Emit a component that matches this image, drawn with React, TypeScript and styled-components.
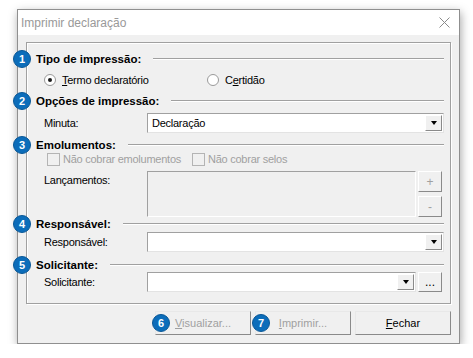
import styled, { createGlobalStyle } from "styled-components";

const GlobalStyle = createGlobalStyle`
  html, body {
    margin: 0;
    padding: 0;
    background: #ffffff;
  }
  body {
    font-family: "Liberation Sans", Arial, sans-serif;
    font-size: 11px;
    color: #000;
  }
  * {
    box-sizing: border-box;
  }
`;

const Window = styled.div`
  margin: 9px 0 0 17px;
  width: 443px;
  display: flex;
  flex-direction: column;
  border: 1px solid #8f8f8f;
  background: #f0f0f0;
  box-shadow: 1px 3px 9px rgba(0, 0, 0, 0.35);
`;

const TitleBar = styled.div`
  height: 25px;
  display: flex;
  align-items: center;
  justify-content: space-between;
  padding: 0 9px 0 3px;
  background: #ffffff;
  color: #999999;
  font-size: 12px;
`;

const Body = styled.div`
  display: flex;
  flex-direction: column;
  gap: 7px;
  padding: 7px 8px 8px 8px;
`;

const Panel = styled.div`
  display: flex;
  flex-direction: column;
  padding: 9px 6px 11px 9px;
  border: 1px solid #a0a0a0;
  box-shadow: inset 1px 1px 0 #ffffff, 1px 1px 0 #ffffff;
`;

const Heading = styled.div<{ $mt?: number }>`
  position: relative;
  display: flex;
  align-items: center;
  gap: 12px;
  height: 14px;
  margin-top: ${(p) => p.$mt ?? 0}px;
  font-size: 11.5px;
  font-weight: bold;
  white-space: nowrap;
`;

const Rule = styled.div`
  flex: 1;
  border-top: 1px solid #a0a0a0;
  border-bottom: 1px solid #ffffff;
`;

const Badge = styled.span<{ $left: number }>`
  position: absolute;
  left: ${(p) => p.$left}px;
  top: 50%;
  transform: translateY(-50%);
  width: 18px;
  height: 18px;
  display: flex;
  align-items: center;
  justify-content: center;
  border-radius: 50%;
  border: 1px solid #0a5897;
  background: #0c6dba;
  color: #ffffff;
  font-family: "Liberation Sans", Arial, sans-serif;
  font-size: 11px;
  font-weight: bold;
  z-index: 2;
`;

const Text = styled.span<{ $disabled?: boolean }>`
  font-size: 11px;
  letter-spacing: -0.25px;
  color: ${(p) => (p.$disabled ? "#a0a0a0" : "#000000")};
  white-space: nowrap;
`;

const RadioRow = styled.div`
  display: flex;
  align-items: center;
  height: 28px;
  padding-left: 8px;
`;

const RadioOption = styled.label<{ $width?: number }>`
  display: flex;
  align-items: center;
  gap: 6px;
  width: ${(p) => (p.$width ? `${p.$width}px` : "auto")};
`;

const RadioCircle = styled.span<{ $checked?: boolean }>`
  width: 12px;
  height: 12px;
  display: flex;
  align-items: center;
  justify-content: center;
  border-radius: 50%;
  border: 1px solid #9a9a9a;
  background: #ffffff;
  &::after {
    content: "";
    width: 4px;
    height: 4px;
    border-radius: 50%;
    background: ${(p) => (p.$checked ? "#1a1a1a" : "transparent")};
  }
`;

const CheckRow = styled.div`
  display: flex;
  align-items: center;
  gap: 11px;
  height: 14px;
  padding-left: 11px;
`;

const CheckOption = styled.label`
  display: flex;
  align-items: center;
  gap: 3px;
`;

const CheckBox = styled.span`
  width: 13px;
  height: 13px;
  border: 1px solid #b4b4b4;
  background: #f0f0f0;
`;

const FieldRow = styled.div<{ $mt?: number; $height?: number }>`
  display: flex;
  align-items: ${(p) => (p.$height ? "flex-start" : "center")};
  height: ${(p) => p.$height ?? 20}px;
  margin-top: ${(p) => p.$mt ?? 0}px;
  padding-left: 8px;
`;

const FieldLabel = styled.div<{ $top?: number }>`
  width: 103px;
  padding-top: ${(p) => p.$top ?? 0}px;
`;

const Controls = styled.div`
  flex: 1;
  display: flex;
  align-items: flex-start;
  gap: 2px;
  height: 100%;
  padding-right: 2px;
`;

const Combo = styled.div<{ $trimRight?: boolean }>`
  flex: 1;
  height: 20px;
  display: flex;
  align-items: stretch;
  padding: 1px;
  margin-right: ${(p) => (p.$trimRight ? "0" : "-2px")};
  border: 1px solid;
  border-color: #a0a0a0 #e3e3e3 #e3e3e3 #a0a0a0;
  background: #ffffff;
`;

const ComboValue = styled.div`
  flex: 1;
  display: flex;
  align-items: center;
  padding-left: 3px;
`;

const DropButton = styled.div`
  width: 17px;
  display: flex;
  align-items: center;
  justify-content: center;
  border: 1px solid;
  border-color: #ffffff #8a8a8a #8a8a8a #ffffff;
  background: #f0f0f0;
`;

const Arrow = styled.span`
  width: 0;
  height: 0;
  border-left: 3.5px solid transparent;
  border-right: 3.5px solid transparent;
  border-top: 4px solid #000000;
`;

const ListBox = styled.div`
  flex: 1;
  height: 46px;
  border: 1px solid;
  border-color: #a0a0a0 #ffffff #ffffff #a0a0a0;
  background: #f0f0f0;
`;

const SideButtons = styled.div`
  display: flex;
  flex-direction: column;
  gap: 4px;
`;

const SmallButton = styled.div<{ $disabled?: boolean; $height?: number }>`
  width: 24px;
  height: ${(p) => p.$height ?? 21}px;
  display: flex;
  align-items: center;
  justify-content: center;
  border: 1px solid;
  border-color: #ffffff #8a8a8a #8a8a8a #ffffff;
  background: #f0f0f0;
  color: ${(p) => (p.$disabled ? "#a0a0a0" : "#000000")};
  font-size: 12px;
  line-height: 1;
`;

const ButtonBar = styled.div`
  display: flex;
  justify-content: flex-end;
  gap: 4px;
`;

const DialogButton = styled.div<{ $disabled?: boolean }>`
  position: relative;
  width: 96px;
  height: 24px;
  display: flex;
  align-items: center;
  justify-content: center;
  border: 1px solid;
  border-color: #e8e8e8 #8a8a8a #8a8a8a #e8e8e8;
  background: #f0f0f0;
  font-size: 11px;
  color: ${(p) => (p.$disabled ? "#a0a0a0" : "#000000")};
`;

function CloseIcon() {
  return (
    <svg width="11" height="11" viewBox="0 0 11 11">
      <path d="M0.5 0.5 L10.5 10.5 M10.5 0.5 L0.5 10.5" stroke="#8a8a8a" strokeWidth="1" fill="none" />
    </svg>
  );
}

function ComboBox({ value, trimRight }: { value?: string; trimRight?: boolean }) {
  return (
    <Combo $trimRight={trimRight}>
      <ComboValue>
        <Text>{value}</Text>
      </ComboValue>
      <DropButton>
        <Arrow />
      </DropButton>
    </Combo>
  );
}

export default function App() {
  return (
    <>
      <GlobalStyle />
      <Window>
        <TitleBar>
          <span>Imprimir declaração</span>
          <CloseIcon />
        </TitleBar>
        <Body>
          <Panel>
            <Heading>
              <Badge $left={-23}>1</Badge>
              <span>Tipo de impressão:</span>
              <Rule />
            </Heading>
            <RadioRow>
              <RadioOption $width={163}>
                <RadioCircle $checked />
                <Text>
                  <u>T</u>ermo declaratório
                </Text>
              </RadioOption>
              <RadioOption>
                <RadioCircle />
                <Text>
                  C<u>e</u>rtidão
                </Text>
              </RadioOption>
            </RadioRow>

            <Heading>
              <Badge $left={-23}>2</Badge>
              <span>Opções de impressão:</span>
              <Rule />
            </Heading>
            <FieldRow $mt={5}>
              <FieldLabel>
                <Text>Minuta:</Text>
              </FieldLabel>
              <Controls>
                <ComboBox value="Declaração" />
              </Controls>
            </FieldRow>

            <Heading $mt={5}>
              <Badge $left={-23}>3</Badge>
              <span>Emolumentos:</span>
              <Rule />
            </Heading>
            <CheckRow>
              <CheckOption>
                <CheckBox />
                <Text $disabled>Não cobrar emolumentos</Text>
              </CheckOption>
              <CheckOption>
                <CheckBox />
                <Text $disabled>Não cobrar selos</Text>
              </CheckOption>
            </CheckRow>
            <FieldRow $mt={5} $height={46}>
              <FieldLabel $top={3}>
                <Text>Lançamentos:</Text>
              </FieldLabel>
              <Controls>
                <ListBox />
                <SideButtons>
                  <SmallButton $disabled>+</SmallButton>
                  <SmallButton $disabled>-</SmallButton>
                </SideButtons>
              </Controls>
            </FieldRow>

            <Heading>
              <Badge $left={-23}>4</Badge>
              <span>Responsável:</span>
              <Rule />
            </Heading>
            <FieldRow $mt={1}>
              <FieldLabel>
                <Text>Responsável:</Text>
              </FieldLabel>
              <Controls>
                <ComboBox />
              </Controls>
            </FieldRow>

            <Heading $mt={6}>
              <Badge $left={-23}>5</Badge>
              <span>Solicitante:</span>
              <Rule />
            </Heading>
            <FieldRow>
              <FieldLabel>
                <Text>Solicitante:</Text>
              </FieldLabel>
              <Controls>
                <ComboBox trimRight />
                <SmallButton $height={20}>...</SmallButton>
              </Controls>
            </FieldRow>
          </Panel>

          <ButtonBar>
            <DialogButton $disabled>
              <Badge $left={-4}>6</Badge>
              <span>
                <u>V</u>isualizar...
              </span>
            </DialogButton>
            <DialogButton $disabled>
              <Badge $left={-4}>7</Badge>
              <span>
                <u>I</u>mprimir...
              </span>
            </DialogButton>
            <DialogButton>
              <span>
                <u>F</u>echar
              </span>
            </DialogButton>
          </ButtonBar>
        </Body>
      </Window>
    </>
  );
}
